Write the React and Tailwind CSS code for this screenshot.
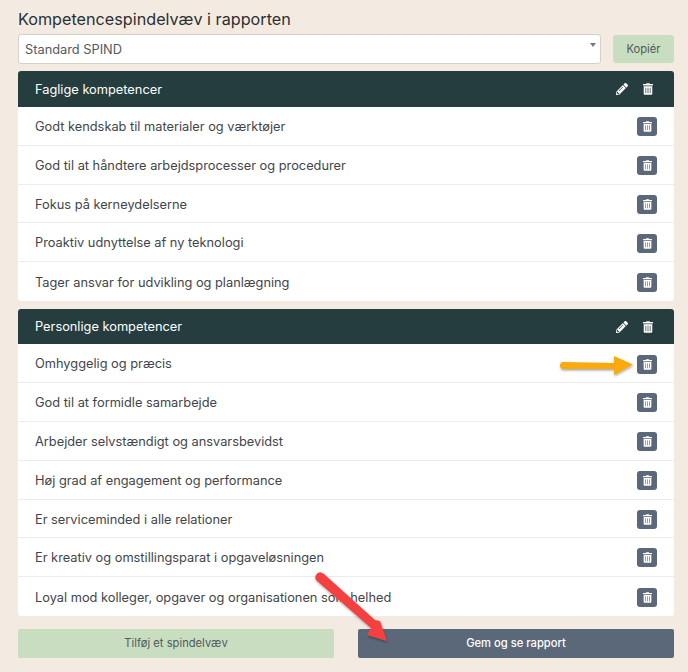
import { FaPencilAlt, FaTrashAlt } from 'react-icons/fa';

const sections = [
  {
    title: 'Faglige kompetencer',
    items: [
      'Godt kendskab til materialer og værktøjer',
      'God til at håndtere arbejdsprocesser og procedurer',
      'Fokus på kerneydelserne',
      'Proaktiv udnyttelse af ny teknologi',
      'Tager ansvar for udvikling og planlægning',
    ],
  },
  {
    title: 'Personlige kompetencer',
    items: [
      'Omhyggelig og præcis',
      'God til at formidle samarbejde',
      'Arbejder selvstændigt og ansvarsbevidst',
      'Høj grad af engagement og performance',
      'Er serviceminded i alle relationer',
      'Er kreativ og omstillingsparat i opgaveløsningen',
      'Loyal mod kolleger, opgaver og organisationen som helhed',
    ],
  },
];

function Section({ title, items }) {
  return (
    <div className="overflow-hidden rounded-[3px] bg-white">
      <div className="flex h-[35.6px] items-center justify-between bg-[#253d3f] pl-[17px] pr-[21px] text-white">
        <span className="text-[12.8px]">{title}</span>
        <div className="flex items-center gap-[15px]">
          <FaPencilAlt className="h-[12px] w-[12px]" />
          <FaTrashAlt className="h-[12px] w-[10px]" />
        </div>
      </div>
      {items.map((item) => (
        <div
          key={item}
          className="flex h-[38.8px] items-center justify-between border-b border-[#ececec] px-[17px] pt-[1.5px] last:border-b-0"
        >
          <span className="text-[12.8px] text-[#3f454b]">{item}</span>
          <span className="flex h-[19px] w-[20px] items-center justify-center rounded-[3px] bg-[#5b687a] text-white">
            <FaTrashAlt className="h-[11px] w-[9px]" />
          </span>
        </div>
      ))}
    </div>
  );
}

export default function App() {
  return (
    <div className="relative h-[672px] w-[688px] overflow-hidden bg-[#f3ebe2] pl-[18px] pr-[14px] font-['Inter',sans-serif]">
      <h1 className="pt-[9px] text-[16.2px] leading-[20px] text-[#2b2f33]">Kompetencespindelvæv i rapporten</h1>

      <div className="mt-[5px] flex items-start justify-between">
        <div className="relative flex h-[30px] w-[583px] items-center rounded-[3px] border border-[#d5d0ca] bg-white pl-[6px] pt-px text-[12.8px] text-[#55595e]">
          Standard SPIND
          <span className="absolute right-[4px] top-[8px] border-x-[3px] border-t-[4px] border-x-transparent border-t-[#777]" />
        </div>
        <button className="mt-px h-[28px] w-[61px] rounded-[3px] bg-[#c9dec1] text-[11.2px] text-[#4d5a5c]">Kopiér</button>
      </div>

      <div className="mt-[7.4px] flex flex-col gap-[7.8px]">
        {sections.map((section) => (
          <Section key={section.title} {...section} />
        ))}
      </div>

      <div className="mt-[13px] flex justify-between">
        <button className="h-[29px] w-[316px] rounded-[2px] bg-[#c9dec1] text-[11.2px] text-[#4d5a5c]">Tilføj et spindelvæv</button>
        <button className="h-[29px] w-[316px] rounded-[2px] bg-[#5b687a] text-[11.2px] font-medium text-white">Gem og se rapport</button>
      </div>

      {/* Annotation arrows on top of the screenshot */}
      <svg className="pointer-events-none absolute left-0 top-0" width="688" height="672" viewBox="0 0 688 672">
        <defs>
          <filter id="arrowShadow" x="-20%" y="-20%" width="140%" height="140%">
            <feDropShadow dx="0.5" dy="1.5" stdDeviation="1.2" floodColor="#000" floodOpacity="0.35" />
          </filter>
        </defs>
        <path
          d="M563 362 L614 363 L614 356 L633 364.5 L614 375 L614 369 L563 369 Q560 369 560 365.5 Q560 362 563 362 Z"
          fill="#fbaa0f"
          filter="url(#arrowShadow)"
        />
        <path
          d="M316 575 Q319 570 324 574 L375 620 L380 621 L387 641 L367 635 L371 628 L317 581 Q314 578 316 575 Z"
          fill="#f44040"
          filter="url(#arrowShadow)"
        />
      </svg>
    </div>
  );
}
